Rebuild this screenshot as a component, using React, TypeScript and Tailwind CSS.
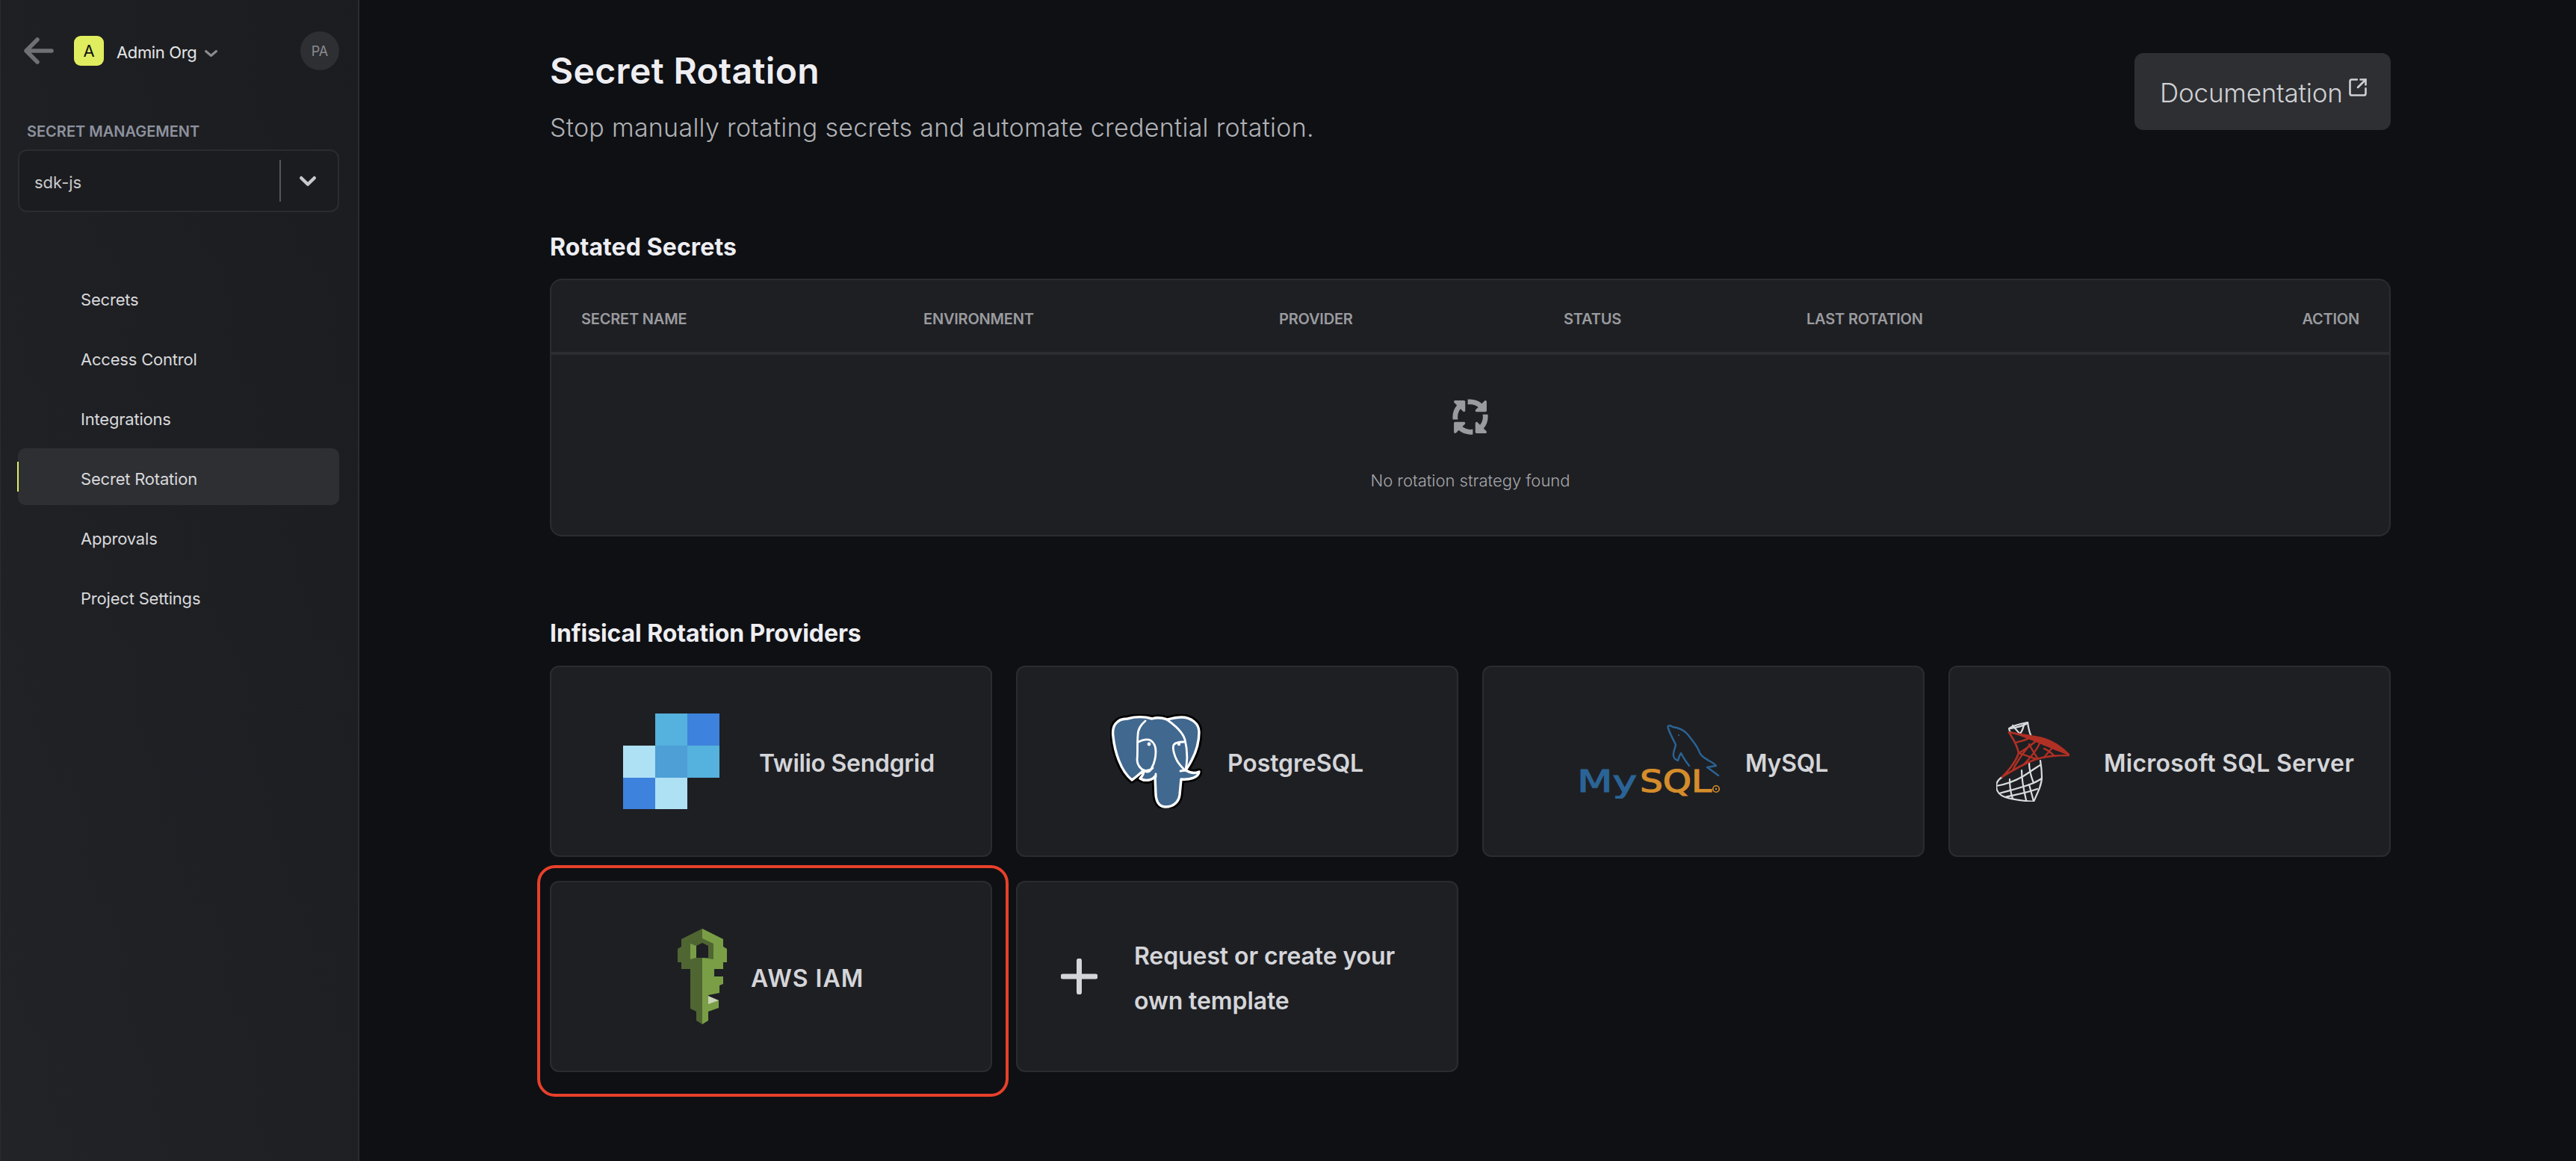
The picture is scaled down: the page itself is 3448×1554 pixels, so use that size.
import React from "react";
import { FaArrowsSpin } from "react-icons/fa6";
import { SquareArrowOutUpRight } from "lucide-react";

const font = { fontFamily: "Inter, 'Liberation Sans', sans-serif" };

function SendgridLogo() {
  return (
    <svg width="129" height="128" viewBox="0 0 129 128" className="shrink-0">
      <rect x="43" y="0" width="43" height="43" fill="#55b1dd" />
      <rect x="86" y="0" width="43" height="43" fill="#3d82dc" />
      <rect x="0" y="43" width="43" height="43" fill="#aee1f4" />
      <rect x="43" y="43" width="43" height="43" fill="#4d9fd6" />
      <rect x="86" y="43" width="43" height="43" fill="#55b1dd" />
      <rect x="0" y="86" width="43" height="42" fill="#3d82dc" />
      <rect x="43" y="86" width="43" height="42" fill="#aee1f4" />
    </svg>
  );
}

function PostgresLogo() {
  const body =
    "M23 6C8 6 2 16 4 30C6 50 14 76 29 88C35 84 39 80 45 75C45 80 43 83 40 86C46 90 56 89 60 83L61 108C62 120 68 124 74 124C86 124 92 116 93 108L95 87C106 88 118 85 119 77C112 80 106 78 101 75C110 62 119 44 119 24C119 12 108 4 95 4C88 4 82 6 76 7C68 4 62 4 56 6C46 3 34 3 23 6Z";
  return (
    <svg width="123" height="126" viewBox="0 0 123 126" className="shrink-0">
      <path d={body} fill="#000" stroke="#000" strokeWidth="9" strokeLinejoin="round" />
      <path d={body} fill="#41688f" stroke="#fff" strokeWidth="3.4" strokeLinejoin="round" />
      <g fill="none" stroke="#fff" strokeWidth="2.8" strokeLinecap="round" strokeLinejoin="round">
        <path d="M47 9C41 14 37 20 37 28C36 40 37 52 36 61C36 67 40 73 46 76" />
        <path d="M74 6C86 14 97 24 100 34C103 46 104 60 101 74" />
        <path d="M38 37C43 34 50 33 54 35C59 38 61 44 61 50C61 60 58 68 55 73C53 77 50 78 46 76" />
        <path d="M99 37C93 37 87 38 85 41C83 46 86 56 90 63C93 68 97 72 100 75" />
        <path d="M45 75C50 76 54 75 57 72" />
        <path d="M61 80L61 84" />
        <path d="M94 76L101 75" />
      </g>
      <circle cx="52" cy="40" r="2.4" fill="#fff" />
      <circle cx="92" cy="40" r="2.2" fill="#fff" />
    </svg>
  );
}

function MysqlLogo() {
  return (
    <svg width="192" height="99" viewBox="0 0 192 99" className="shrink-0">
      <g fill="none" stroke="#2a6496" strokeWidth="2.4" strokeLinejoin="round" strokeLinecap="round">
        <path d="M122 5C120 1 124 0 128 3C136 4 142 6 148 13C155 22 160 27 163 35C165 42 170 44 176 48C182 51 185 53 186 55C181 56 178 56 174 57C180 61 185 65 189 68" />
        <path d="M122 5C125 14 129 20 132 27C131 32 128 37 129 42C130 46 132 47 135 48C136 44 137 41 139 38C142 44 146 50 150 55" />
      </g>
      <circle cx="136" cy="14" r="1.1" fill="#2a6496" />
      <text x="0" y="90" fontFamily="'DejaVu Sans', sans-serif" fontWeight="400" fontSize="40" fill="#2a6496" stroke="#2a6496" strokeWidth="1.2" textLength="80" lengthAdjust="spacingAndGlyphs">My</text>
      <text x="84" y="90" fontFamily="'DejaVu Sans', sans-serif" fontWeight="400" fontSize="40" fill="#d58d2b" stroke="#d58d2b" strokeWidth="1.2" textLength="96" lengthAdjust="spacingAndGlyphs">SQL</text>
      <circle cx="186" cy="86" r="4.2" fill="none" stroke="#d58d2b" strokeWidth="1.6" />
      <circle cx="186" cy="86" r="1.2" fill="#d58d2b" />
    </svg>
  );
}

function SqlServerLogo() {
  return (
    <svg width="98" height="107" viewBox="0 0 98 107" className="shrink-0">
      <g fill="none" stroke="#d9dcdd" strokeWidth="2.2" strokeLinejoin="round" strokeLinecap="round">
        <path d="M42 1C32 3 22 5 17 9C17 12 18 13 20 15" />
        <path d="M42 1C43 8 44 14 47 20" />
        <path d="M19 9C26 8 34 7 42 2" />
        <path d="M22 5C26 10 29 14 34 18" />
        <path d="M37 4C36 9 34 14 31 17" />
        <path d="M8 74C2 78 0 82 0 86C0 94 6 99 12 101C24 105 38 106 50 107C56 94 61 84 61 74C61 66 60 58 59 52" />
        <path d="M0 86C12 84 24 80 36 73C44 68 52 62 59 58" />
        <path d="M4 96C16 92 30 90 50 82C54 80 58 78 61 76" />
        <path d="M12 101C24 98 38 96 55 90" />
        <path d="M18 77C18 85 18 92 22 103" />
        <path d="M34 65C34 76 36 88 40 105" />
        <path d="M44 55C44 62 46 72 50 82" />
        <path d="M50 107C48 98 46 92 44 84" />
      </g>
      <path d="M17 14C34 18 50 19 61 22C76 26 90 36 98 45C80 45 62 47 51 51C38 56 22 65 8 74C18 64 26 54 30 42C28 30 22 22 17 14Z" fill="none" stroke="#b03024" strokeWidth="2.6" strokeLinejoin="round" />
      <g fill="none" stroke="#b03024" strokeWidth="2.4" strokeLinecap="round">
        <path d="M30 42C38 38 46 32 58 22" />
        <path d="M26 28C34 26 44 24 46 19" />
        <path d="M30 42C38 44 50 50 56 50" />
        <path d="M60 23C58 32 50 44 36 58" />
        <path d="M64 48C70 40 76 34 80 30" />
        <path d="M44 30C48 38 52 44 56 50" />
        <path d="M22 65C28 52 36 42 44 32" />
        <path d="M64 36C70 38 74 42 78 46" />
      </g>
      <path d="M17 14C34 18 50 19 61 22C76 26 90 36 98 45C76 38 54 26 17 14Z" fill="#b03024" />
      <path d="M98 45C80 45 62 47 51 51C38 56 22 65 8 74C26 58 62 44 98 45Z" fill="#b03024" />
    </svg>
  );
}

function KeyLogo() {
  return (
    <svg width="66" height="128" viewBox="0 0 66 128" className="shrink-0">
      <path d="M33 0L5 14V24L0 27V45H5V54H17V107L25 111V123L33 128Z" fill="#4f6632" />
      <path d="M33 0L61 14V24L66 27V45H61V54H49V64H61V74L56 76V86L41 89V92L55 96V106L41 111V123L33 128Z" fill="#7a9e46" />
      <path d="M41 90L55 96L41 101Z" fill="#c9d4b8" />
      <path d="M17 20L33 13L48 20V41L33 39L17 41Z" fill="#4f6632" />
      <path d="M17 20L25 23V39L17 41Z" fill="#7a9e46" />
      <path d="M25 23L33 19L41 23V39H25Z" fill="#1e1f23" />
    </svg>
  );
}

function Chevron({ w, h, sw, color }: { w: number; h: number; sw: number; color: string }) {
  return (
    <svg width={w} height={h} viewBox={`0 0 ${w} ${h}`} className="shrink-0">
      <polyline points={`${sw / 2 + 1},${sw / 2 + 1} ${w / 2},${h - sw / 2 - 1} ${w - sw / 2 - 1},${sw / 2 + 1}`} fill="none" stroke={color} strokeWidth={sw} strokeLinecap="round" strokeLinejoin="round" />
    </svg>
  );
}

const navItems = ["Secrets", "Access Control", "Integrations", "Secret Rotation", "Approvals", "Project Settings"];

function Card({ pad, gap, text, logo, track }: { pad: string; gap: string; text: string; logo: React.ReactNode; track: string }) {
  return (
    <div className={`flex h-[256px] items-center rounded-[12px] border-2 border-[#2b2c30] bg-[#1e1f23] ${pad}`}>
      {logo}
      <span className={`mt-[6px] whitespace-nowrap text-[32px] leading-[40px] font-semibold text-[#d4d5d9] ${gap} ${track}`}>{text}</span>
    </div>
  );
}

export default function App() {
  return (
    <div style={font} className="flex h-[1554px] w-[3448px] overflow-hidden bg-[#0e1014]">
      <aside className="flex h-full w-[481px] shrink-0 flex-col border-r-2 border-l border-[#2b2c30] bg-gradient-to-tr from-[#222327] to-[#1b1c1f] pr-[25px] pl-[23px]">
        <div className="mt-[42px] flex h-[52px] items-center">
          <svg width="40" height="36" viewBox="0 0 40 36" className="ml-[8px] shrink-0">
            <path d="M37 18H4M18 3L3 18L18 33" fill="none" stroke="#6f7074" strokeWidth="5.5" strokeLinecap="round" strokeLinejoin="round" />
          </svg>
          <div className="ml-[27px] flex h-[40px] w-[40px] shrink-0 items-center justify-center rounded-[9px] bg-[#e0ed5f] text-[22px] font-normal text-[#111]">A</div>
          <span className="mt-[4px] ml-[17px] text-[22px] leading-[28px] font-normal tracking-[-0.35px] text-[#e4e5e8]">Admin Org</span>
          <span className="mt-[6px] ml-[9px]"><Chevron w={19} h={11} sw={3} color="#8b8c90" /></span>
          <div className="ml-auto flex h-[52px] w-[52px] items-center justify-center rounded-full bg-[#2e2f33] text-[18px] text-[#8b8c90]">PA</div>
        </div>
        <div className="mt-[72px] ml-[12px] text-[20px] leading-[20px] font-semibold text-[#8d929e]">SECRET MANAGEMENT</div>
        <div className="mt-[14px] flex h-[84px] items-center rounded-[12px] border-2 border-[#2b2c30] bg-[#1b1c1f] pl-[20px]">
          <span className="mt-[3px] flex-1 text-[22px] leading-[28px] text-[#c8c9cc]">sdk-js</span>
          <div className="h-[56px] w-[2px] bg-[#55565a]" />
          <span className="mr-[28px] ml-[24px]"><Chevron w={24} h={15} sw={4.5} color="#c8c9cc" /></span>
        </div>
        <nav className="mt-[76px] flex flex-col gap-[4px]">
          {navItems.map((n) => (
            <div key={n} className={`relative flex h-[76px] items-center rounded-[10px] pt-[5px] pl-[84px] text-[22px] leading-[28px] tracking-[-0.2px] text-[#d8d9dc] ${n === "Secret Rotation" ? "bg-[#2e2f33]" : ""}`}>
              {n === "Secret Rotation" && <span className="absolute top-[18px] -left-[1px] h-[40px] w-[2px] bg-[#e0ed5f]" />}
              {n}
            </div>
          ))}
        </nav>
      </aside>

      <main className="min-w-0 flex-1 pr-[248px] pl-[255px]">
        <div className="flex items-start justify-between">
          <div className="pt-[65px]">
            <h1 className="text-[48px] leading-[60px] font-semibold tracking-[0.35px] text-[#eeeef2]">Secret Rotation</h1>
            <p className="mt-[22px] text-[34px] leading-[48px] font-light tracking-[0.28px] text-[#b0b1b5]">Stop manually rotating secrets and automate credential rotation.</p>
          </div>
          <div className="mt-[71px] flex h-[103px] w-[343px] items-center rounded-[12px] bg-[#2e2f33] pt-[3px] pl-[34px]">
            <span className="text-[35px] leading-[44px] font-light tracking-[-0.2px] text-[#d0d1d4]">Documentation</span>
            <SquareArrowOutUpRight size={28} strokeWidth={2.2} className="mb-[14px] ml-[6px] text-[#d0d1d4]" />
          </div>
        </div>

        <h2 className="mt-[116px] text-[32px] leading-[40px] font-bold tracking-[0.1px] text-[#eeeef2]">Rotated Secrets</h2>
        <div className="mt-[22px] h-[345px] rounded-[16px] border-2 border-[#2b2c30] bg-[#1e1f23]">
          <div className="grid h-[100px] grid-cols-[458px_476px_381px_325px_1fr_auto] items-center border-b-4 border-[#2c2d31] pt-[8px] pr-[40px] pl-[40px] text-[20px] font-semibold tracking-[-0.2px] text-[#9a9b9f]">
            <span>SECRET NAME</span>
            <span>ENVIRONMENT</span>
            <span>PROVIDER</span>
            <span>STATUS</span>
            <span>LAST ROTATION</span>
            <span>ACTION</span>
          </div>
          <div className="flex flex-col items-center">
            <FaArrowsSpin size={54} className="mt-[56px] text-[#9a9b9f]" />
            <span className="mt-[43px] text-[22px] leading-[30px] font-light text-[#a6a7ab]">No rotation strategy found</span>
          </div>
        </div>

        <h2 className="mt-[110px] text-[32px] leading-[40px] font-bold tracking-[-0.1px] text-[#eeeef2]">Infisical Rotation Providers</h2>
        <div className="mt-[23px] grid grid-cols-4 gap-[32px]">
          <Card pad="pl-[96px]" gap="ml-[53px]" track="tracking-[-0.3px]" text="Twilio Sendgrid" logo={<SendgridLogo />} />
          <Card pad="pl-[124px]" gap="ml-[34px]" track="tracking-[-0.1px]" text="PostgreSQL" logo={<PostgresLogo />} />
          <Card pad="pl-[125px]" gap="ml-[33px]" track="tracking-[-0.2px]" text="MySQL" logo={<MysqlLogo />} />
          <Card pad="pl-[62px]" gap="ml-[46px]" track="tracking-[0.25px]" text="Microsoft SQL Server" logo={<SqlServerLogo />} />
          <div className="relative">
            <div className="pointer-events-none absolute -top-[21px] -right-[22px] -bottom-[33px] -left-[17px] rounded-[24px] border-4 border-[#e8402a]" />
            <Card pad="pl-[169px]" gap="ml-[32px]" track="tracking-[1px]" text="AWS IAM" logo={<KeyLogo />} />
          </div>
          <div className="flex h-[256px] items-center rounded-[12px] border-2 border-[#2b2c30] bg-[#1e1f23] pl-[58px]">
            <svg width="49" height="48" viewBox="0 0 49 48" className="shrink-0">
              <path d="M24.5 3V45M3 24H46" stroke="#d4d5d9" strokeWidth="7" strokeLinecap="round" />
            </svg>
            <span className="mt-[6px] ml-[49px] w-[380px] text-[32px] leading-[60px] font-semibold tracking-[-0.1px] text-[#d4d5d9]">Request or create your own template</span>
          </div>
        </div>
      </main>
    </div>
  );
}
